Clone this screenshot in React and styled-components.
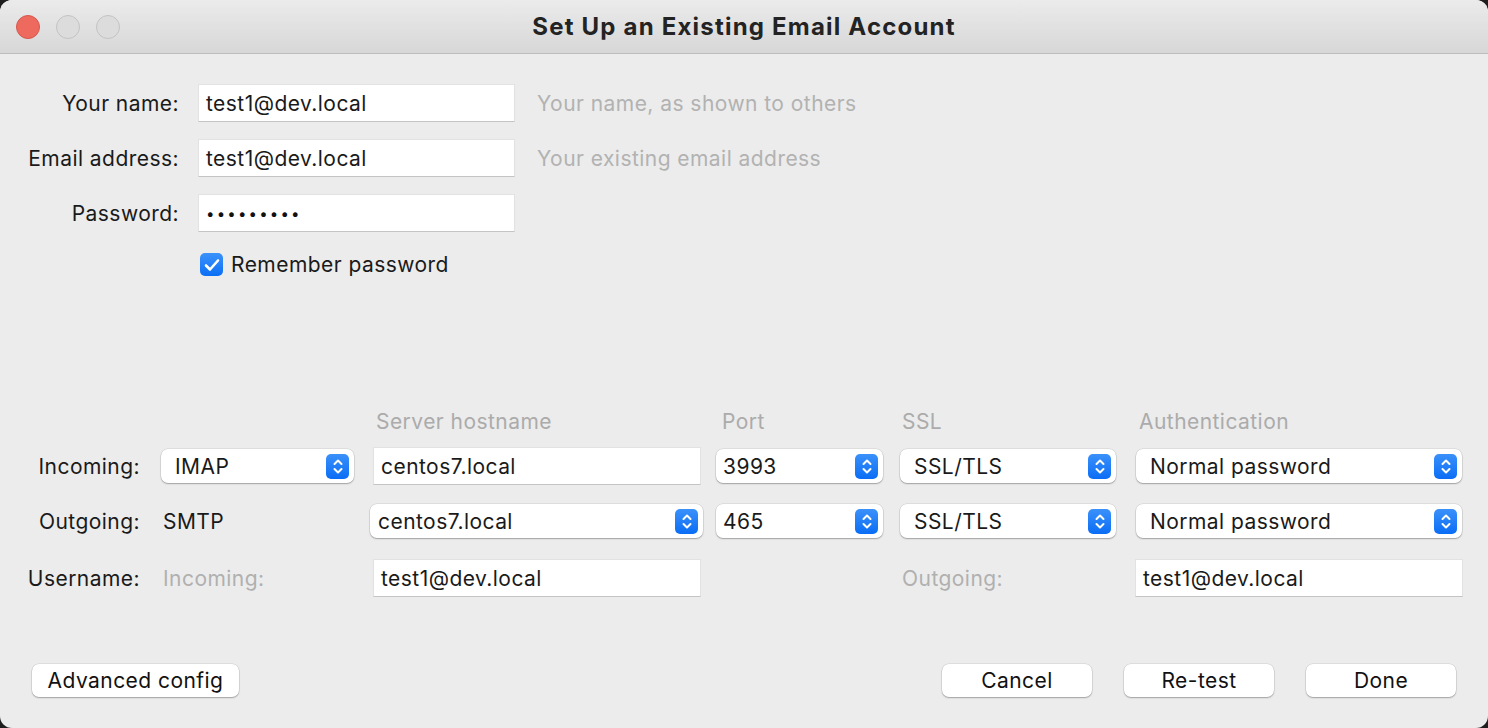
import React from "react";
import styled, { createGlobalStyle } from "styled-components";

const Global = createGlobalStyle`
  html, body { margin: 0; padding: 0; background: #1e1e1e; }
  body { font-family: Inter, "Liberation Sans", sans-serif; }
  * { box-sizing: border-box; }
`;

const Window = styled.div`
  width: 1488px;
  height: 728px;
  background: #ececec;
  border-radius: 12px;
  overflow: hidden;
  display: flex;
  flex-direction: column;
  font-family: Inter, "Liberation Sans", sans-serif;
  font-size: 21px;
  letter-spacing: 0.45px;
  color: #1a1a1a;
`;

const TitleBar = styled.div`
  height: 54px;
  flex: none;
  display: flex;
  align-items: center;
  position: relative;
  background: linear-gradient(#ebebeb, #d7d7d7);
  border-bottom: 1px solid #bcbcbc;
  padding-left: 16px;
`;

const Lights = styled.div`
  display: flex;
  gap: 16px;
`;

const Light = styled.span`
  width: 24px;
  height: 24px;
  border-radius: 50%;
  background: ${(p) => (p.$red ? "#ee6a5f" : "#dcdcdc")};
  border: 1px solid ${(p) => (p.$red ? "#d5574c" : "#c3c3c3")};
`;

const Title = styled.div`
  position: absolute;
  left: 0;
  right: 0;
  text-align: center;
  font-weight: 700;
  font-size: 24px;
  letter-spacing: 1.2px;
  color: #232323;
  pointer-events: none;
`;

const Content = styled.div`
  flex: 1;
  display: flex;
  flex-direction: column;
  padding: 30px 0 31px;
`;

const TopForm = styled.div`
  display: grid;
  grid-template-columns: 198px 317px 1fr;
  grid-auto-rows: 38px;
  row-gap: 17px;
  align-items: center;
`;

const Label = styled.div`
  height: 38px;
  display: flex;
  align-items: center;
  justify-content: flex-end;
  padding-right: ${(p) => p.$pr || 19}px;
  white-space: nowrap;
`;

const TextField = styled.div`
  height: 38px;
  background: #fff;
  border: 1px solid #e2e2e2;
  border-bottom-color: #c4c4c4;
  display: flex;
  align-items: center;
  padding-left: 7px;
  white-space: nowrap;
  width: ${(p) => (p.$w ? p.$w + "px" : "100%")};
  margin-left: ${(p) => p.$ml || 0}px;
`;

const Dots = styled.span`
  font-size: 15px;
  letter-spacing: 2.2px;
  color: #111;
`;

const Hint = styled.div`
  color: #b2b2b2;
  padding-left: 22px;
  white-space: nowrap;
`;

const CheckRow = styled.label`
  grid-column: 2 / 4;
  align-self: start;
  display: flex;
  align-items: center;
  gap: 8px;
  padding-left: 2px;
  margin-top: 4px;
  height: 23px;
  white-space: nowrap;
`;

const CheckBox = styled.span`
  width: 23px;
  height: 23px;
  border-radius: 5px;
  background: linear-gradient(#3c92fa, #0b6ff5);
  display: flex;
  align-items: center;
  justify-content: center;
`;

const ServerGrid = styled.div`
  margin-top: 122px;
  display: grid;
  grid-template-columns: 161px 209px 346px 184px 236px 326px;
  grid-template-rows: 38px 55px 57px 38px;
  align-items: start;
`;

const ColHead = styled.div`
  height: 24px;
  display: flex;
  align-items: center;
  color: #ababab;
  padding-left: ${(p) => p.$pl || 4}px;
  white-space: nowrap;
`;

const Plain = styled.div`
  height: 38px;
  display: flex;
  align-items: center;
  padding-left: 2px;
  white-space: nowrap;
  color: ${(p) => (p.$muted ? "#b0b0b0" : "inherit")};
`;

const SelectBox = styled.div`
  width: ${(p) => p.$w}px;
  height: 34px;
  margin-top: 2px;
  background: #fff;
  border-radius: 7px;
  box-shadow: 0 0 0 0.5px rgba(0, 0, 0, 0.12), 0 1px 1.5px rgba(0, 0, 0, 0.28);
  display: flex;
  align-items: center;
  justify-content: space-between;
  padding-left: ${(p) => p.$pl || 14}px;
  padding-right: 5px;
  white-space: nowrap;
`;

const Stepper = styled.span`
  width: 23px;
  height: 25px;
  border-radius: 5px;
  background: linear-gradient(#3b91fa, #0a6df5);
  display: flex;
  align-items: center;
  justify-content: center;
`;

const Footer = styled.div`
  margin-top: auto;
  display: flex;
  align-items: center;
  padding: 0 32px;
`;

const ButtonGroup = styled.div`
  margin-left: auto;
  display: flex;
  gap: 32px;
`;

const Button = styled.button`
  width: ${(p) => p.$w}px;
  height: 33px;
  border: none;
  background: #fff;
  border-radius: 7px;
  box-shadow: 0 0 0 0.5px rgba(0, 0, 0, 0.12), 0 1px 1.5px rgba(0, 0, 0, 0.28);
  font: inherit;
  letter-spacing: inherit;
  color: #111;
  padding: 0;
`;

const Arrows = () => (
  <svg width="12" height="17" viewBox="0 0 12 17" fill="none">
    <path d="M2.5 6 L6 2.5 L9.5 6" stroke="#fff" strokeWidth="2" strokeLinecap="round" strokeLinejoin="round" />
    <path d="M2.5 11 L6 14.5 L9.5 11" stroke="#fff" strokeWidth="2" strokeLinecap="round" strokeLinejoin="round" />
  </svg>
);

const Select = ({ w, pl, children }) => (
  <SelectBox $w={w} $pl={pl}>
    <span>{children}</span>
    <Stepper>
      <Arrows />
    </Stepper>
  </SelectBox>
);

export default function App() {
  return (
    <>
      <Global />
      <Window>
        <TitleBar>
          <Lights>
            <Light $red />
            <Light />
            <Light />
          </Lights>
          <Title>Set Up an Existing Email Account</Title>
        </TitleBar>
        <Content>
          <TopForm>
            <Label>Your name:</Label>
            <TextField>test1@dev.local</TextField>
            <Hint>Your name, as shown to others</Hint>
            <Label>Email address:</Label>
            <TextField>test1@dev.local</TextField>
            <Hint>Your existing email address</Hint>
            <Label>Password:</Label>
            <TextField>
              <Dots>•••••••••</Dots>
            </TextField>
            <div />
            <div />
            <CheckRow>
              <CheckBox>
                <svg width="16" height="14" viewBox="0 0 16 14" fill="none">
                  <path d="M2 7.5 L6 11.5 L14 2.5" stroke="#fff" strokeWidth="2.6" strokeLinecap="round" strokeLinejoin="round" />
                </svg>
              </CheckBox>
              Remember password
            </CheckRow>
          </TopForm>

          <ServerGrid>
            <div />
            <div />
            <ColHead $pl={6}>Server hostname</ColHead>
            <ColHead $pl={6}>Port</ColHead>
            <ColHead $pl={2}>SSL</ColHead>
            <ColHead $pl={3}>Authentication</ColHead>

            <Label $pr={21}>Incoming:</Label>
            <Select w={193}>IMAP</Select>
            <TextField $w={328} $ml={3}>centos7.local</TextField>
            <Select w={167} pl={7}>3993</Select>
            <Select w={216}>SSL/TLS</Select>
            <Select w={326}>Normal password</Select>

            <Label $pr={21}>Outgoing:</Label>
            <Plain>SMTP</Plain>
            <Select w={333} pl={8}>centos7.local</Select>
            <Select w={167} pl={7}>465</Select>
            <Select w={216}>SSL/TLS</Select>
            <Select w={326}>Normal password</Select>

            <Label $pr={21}>Username:</Label>
            <Plain $muted>Incoming:</Plain>
            <TextField $w={328} $ml={3}>test1@dev.local</TextField>
            <div />
            <Plain $muted>Outgoing:</Plain>
            <TextField $w={328} $ml={-1}>test1@dev.local</TextField>
          </ServerGrid>

          <Footer>
            <Button $w={207}>Advanced config</Button>
            <ButtonGroup>
              <Button $w={150}>Cancel</Button>
              <Button $w={150}>Re-test</Button>
              <Button $w={150}>Done</Button>
            </ButtonGroup>
          </Footer>
        </Content>
      </Window>
    </>
  );
}
